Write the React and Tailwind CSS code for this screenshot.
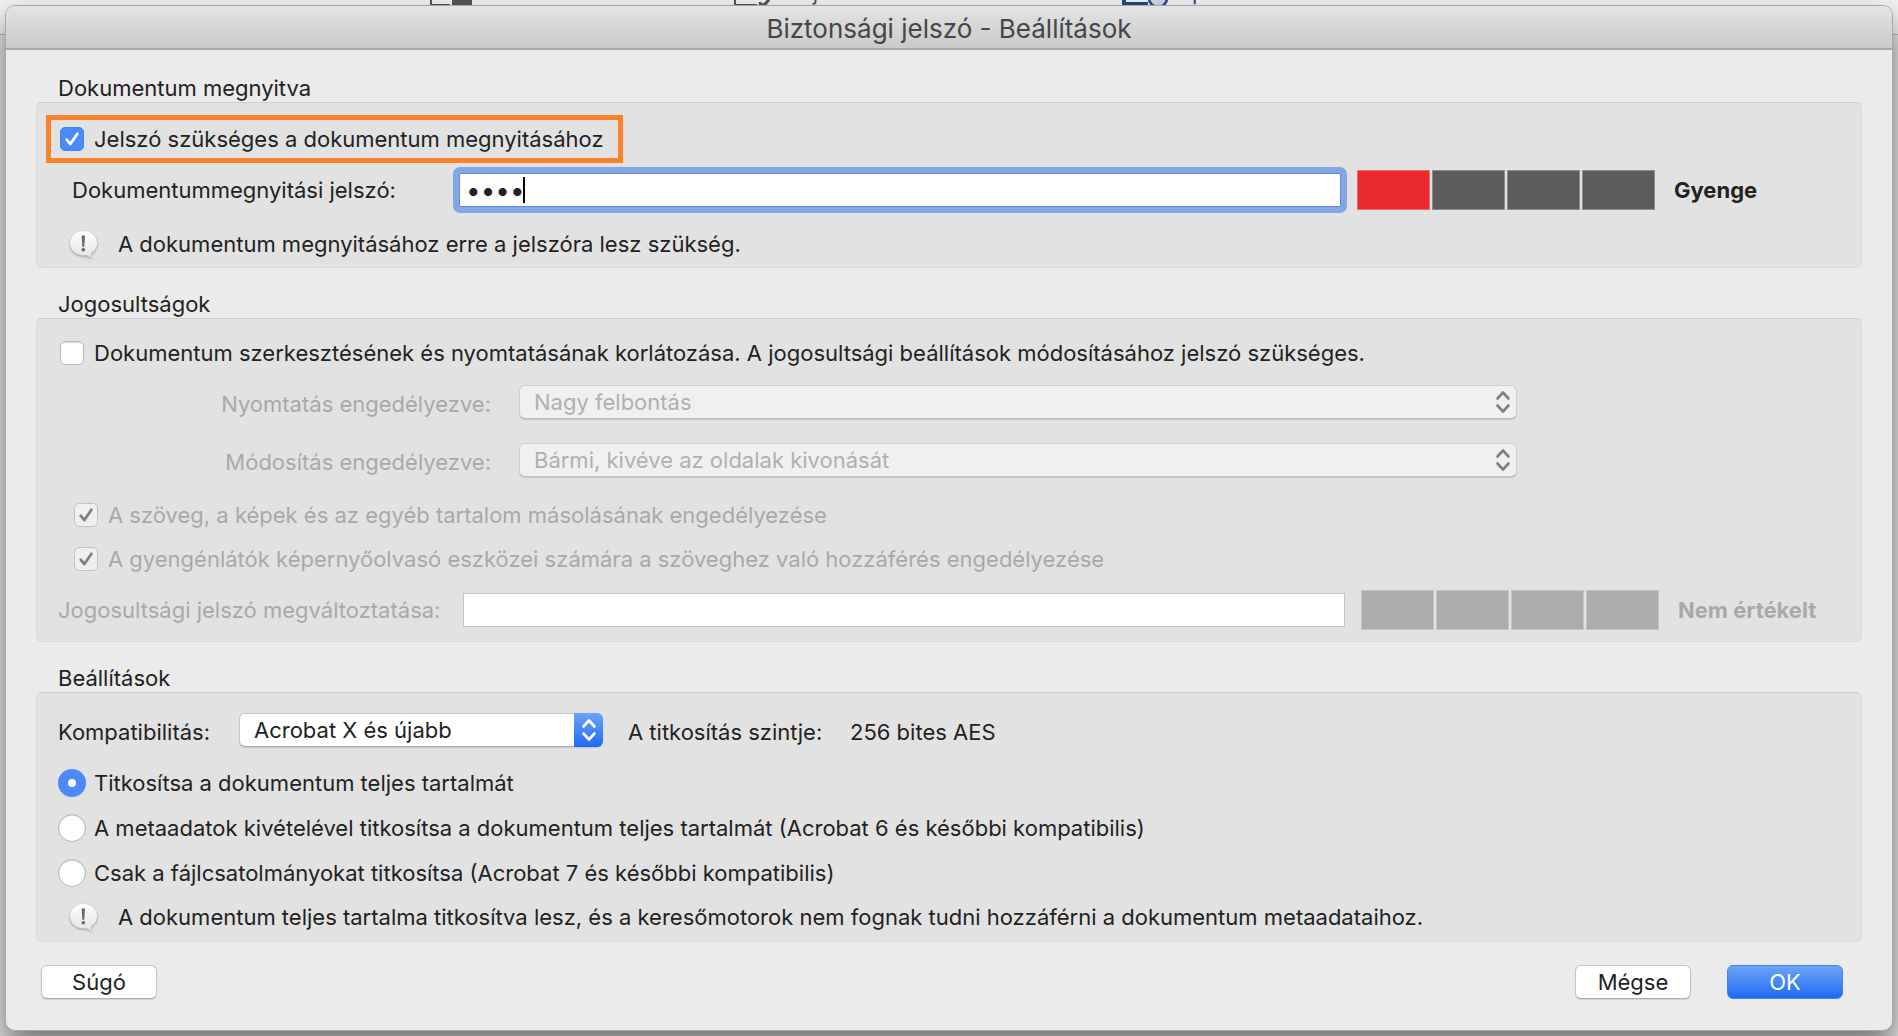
import { useState } from 'react';

function Check({ className }) {
  return (
    <svg viewBox="0 0 24 24" className={`pointer-events-none col-start-1 row-start-1 size-6 ${className}`} fill="none" stroke="currentColor" strokeWidth="2.8" strokeLinecap="round" strokeLinejoin="round">
      <path d="M6.8 12.8 10.4 17 17.4 6.8" />
    </svg>
  );
}

function Checkbox({ label, checked, onChange, disabled }) {
  return (
    <label className={`flex items-center gap-[10px] ${disabled ? 'text-[#a9a9a9]' : ''}`}>
      <span className="grid shrink-0">
        <input
          type="checkbox"
          checked={checked}
          onChange={(e) => onChange?.(e.target.checked)}
          disabled={disabled}
          className="col-start-1 row-start-1 size-6 appearance-none rounded-[5px] border border-[#b9b9b9] bg-white shadow-[inset_0_1px_1px_rgba(0,0,0,0.15)] outline-none checked:border-[#4585f5] checked:bg-[#4b8af8] checked:shadow-none disabled:border-[#c3c3c3] disabled:bg-[#efefef]"
        />
        {checked && <Check className={disabled ? 'text-[#808080]' : 'text-white'} />}
      </span>
      <span>{label}</span>
    </label>
  );
}

function Radio({ label, value, selected, onSelect }) {
  return (
    <label className="flex h-8 items-center gap-2">
      <input
        type="radio"
        name="scope"
        value={value}
        checked={selected === value}
        onChange={() => onSelect(value)}
        className="size-7 shrink-0 appearance-none rounded-full border border-[#b4b4b4] bg-white shadow-[inset_0_1px_1px_rgba(0,0,0,0.15)] outline-none checked:border-[10px] checked:border-[#4b8af8] checked:shadow-none"
      />
      <span>{label}</span>
    </label>
  );
}

function Arrows() {
  return (
    <svg viewBox="0 0 16 24" className="h-6 w-4" fill="none" stroke="currentColor" strokeWidth="2.6" strokeLinecap="round" strokeLinejoin="round">
      <path d="M2.5 8.5 8 2.5l5.5 6M2.5 15.5 8 21.5l5.5-6" />
    </svg>
  );
}

function Select({ id, options, disabled, className }) {
  return (
    <div className={`relative ${className}`}>
      <select
        id={id}
        disabled={disabled}
        className="h-[34px] w-full appearance-none rounded-[6px] border border-[#c4c4c4] border-b-[#b0b0b0] bg-white pl-[14px] pr-10 leading-7 opacity-100 shadow-[0_1px_1px_rgba(0,0,0,0.12)] outline-none disabled:border-[#cfcfcf] disabled:border-b-[#bfbfbf] disabled:bg-[#f0f0f0] disabled:text-[#b0b0b0]"
      >
        {options.map((o) => (
          <option key={o}>{o}</option>
        ))}
      </select>
      <span
        className={`pointer-events-none absolute inset-y-0 right-0 flex w-[29px] items-center justify-center rounded-r-[6px] ${
          disabled ? 'text-[#808080]' : 'bg-gradient-to-b from-[#6ba3f7] to-[#1c69f5] text-white'
        }`}
      >
        <Arrows />
      </span>
    </div>
  );
}

function Meter({ cells }) {
  return (
    <div className="flex shrink-0 gap-[2px]">
      {cells.map((c, i) => (
        <span key={i} className={`h-10 w-[73px] border border-white/30 ${c}`} />
      ))}
    </div>
  );
}

function Note({ children }) {
  return (
    <div className="flex h-8 items-center gap-5">
      <svg viewBox="0 0 29 29" className="size-[29px] shrink-0 drop-shadow-[0_1px_1px_rgba(0,0,0,0.35)]">
        <defs>
          <linearGradient id="bubble" x1="0" y1="0" x2="0" y2="1">
            <stop offset="0" stopColor="#fff" />
            <stop offset="1" stopColor="#e3e3e3" />
          </linearGradient>
        </defs>
        <path d="M14.5 1C22 1 28 6.4 28 13.2c0 4.3-2.4 8-6 10.2l.5 4.6-5-2.8c-1 .2-2 .3-3 .3C7 25.5 1 20 1 13.2S7 1 14.5 1Z" fill="url(#bubble)" />
        <path d="M12.6 5.5h3.4l-.8 11.2h-1.800Z" fill="#666" />
        <circle cx="14.3" cy="19.8" r="1.8" fill="#666" />
      </svg>
      <p>{children}</p>
    </div>
  );
}

function Group({ title, className, children }) {
  return (
    <section>
      <h2 className="pl-[22px] leading-7">{title}</h2>
      <div className={`rounded-[6px] border border-[#dadada] border-t-[#cdcdcd] bg-[#e2e2e2] ${className}`}>{children}</div>
    </section>
  );
}

// Toolbar of the window behind the dialog, mostly covered by it
function Toolbar() {
  return (
    <div className="flex h-[35px] overflow-hidden border-b border-[#b5b5b5] bg-[#f2f2f2]">
      <div className="-mt-[22px] flex h-7 items-end pl-[430px] leading-7 text-[#555]">
        <div className="flex w-[304px] items-end gap-[10px]">
          <svg viewBox="0 0 42 28" className="h-7 w-[42px]">
            <path d="M1 4v23h19" fill="none" stroke="#555" strokeWidth="2" />
            <path d="M22 12h20v16H22Z" fill="#555" />
          </svg>
          <span className="whitespace-nowrap">Szerkesztés letiltása</span>
        </div>
        <div className="flex w-[388px] items-end gap-[10px]">
          <svg viewBox="0 0 42 28" className="h-7 w-[42px]">
            <path d="M1 4v23h22" fill="none" stroke="#555" strokeWidth="2" />
            <path d="M26 24c0 4 4 4 7 0L40 14" fill="none" stroke="#555" strokeWidth="3" />
          </svg>
          <span className="whitespace-nowrap">Rejtett adatok eltávolítása</span>
        </div>
        <div className="flex items-end gap-[10px] text-[#1a4c92]">
          <svg viewBox="0 0 46 28" className="h-7 w-[46px]">
            <path d="M2 4v22h24" fill="none" stroke="#1a4c92" strokeWidth="4" />
            <circle cx="36" cy="20" r="9" fill="#cfd8ea" stroke="#1a4c92" strokeWidth="2.5" />
          </svg>
          <span className="whitespace-nowrap">Speciális beállítások</span>
        </div>
      </div>
    </div>
  );
}

export default function App() {
  const [openPassword, setOpenPassword] = useState('abcd');
  const [requireOpen, setRequireOpen] = useState(true);
  const [restrict, setRestrict] = useState(false);
  const [scope, setScope] = useState('all');

  return (
    <div className="min-h-screen overflow-hidden bg-[#e6e6e6] font-['Inter','Liberation_Sans',sans-serif] text-[22px] leading-7 text-[#222]">
      <Toolbar />

      <main className="relative mx-[5px] -mt-[30px] mb-[5px] rounded-[10px] border border-[#a8a8a8] bg-[#ebebeb] shadow-[0_16px_30px_rgba(0,0,0,0.5)]">
        <header className="flex h-11 items-center justify-center rounded-t-[9px] border-b-2 border-[#a9a9a9] bg-gradient-to-b from-[#e4e4e4] to-[#cacaca] pt-1">
          <h1 className="text-[26px] text-[#464646]">Biztonsági jelszó - Beállítások</h1>
        </header>

        <form className="flex flex-col gap-[22px] px-[30px] pt-6 pb-[31px]" onSubmit={(e) => e.preventDefault()}>
          <Group title="Dokumentum megnyitva" className="pt-3 pb-[7px]">
            <div className="ml-[9px] flex h-12 w-fit items-center border-[5px] border-[#fb822b] pl-[9px] pr-[14px]">
              <Checkbox label="Jelszó szükséges a dokumentum megnyitásához" checked={requireOpen} onChange={setRequireOpen} />
            </div>
            <div className="mt-1 flex h-[46px] items-center pl-[35px]">
              <label htmlFor="open-password" className="w-[387px] shrink-0">
                Dokumentummegnyitási jelszó:
              </label>
              <div className="relative mr-4 min-w-0 flex-1">
                <input
                  id="open-password"
                  type="password"
                  value={openPassword}
                  onChange={(e) => setOpenPassword(e.target.value)}
                  className="block h-[34px] w-full rounded-[1px] border border-[#5f87d6] bg-white pl-[6px] text-[26px] caret-transparent outline-[6px] outline-[#83a6e6]"
                />
                <span className="absolute top-1 left-[64px] h-[26px] w-[2px] bg-black" />
              </div>
              <Meter cells={['bg-[#ea2a2c]', 'bg-[#5c5c5c]', 'bg-[#5c5c5c]', 'bg-[#5c5c5c]']} />
              <output htmlFor="open-password" className="w-[206px] shrink-0 pl-[19px] font-bold">
                Gyenge
              </output>
            </div>
            <div className="mt-[15px] pl-8">
              <Note>A dokumentum megnyitásához erre a jelszóra lesz szükség.</Note>
            </div>
          </Group>

          <Group title="Jogosultságok" className="pt-[18px] pb-[11px]">
            <div className="flex h-8 items-center pl-[23px]">
              <Checkbox
                label="Dokumentum szerkesztésének és nyomtatásának korlátozása. A jogosultsági beállítások módosításához jelszó szükséges."
                checked={restrict}
                onChange={setRestrict}
              />
            </div>
            <div className="mt-4 grid grid-cols-[454px_1fr] items-center gap-x-7 gap-y-6 pr-[344px]">
              <label htmlFor="printing" className="pt-1 text-right leading-7 text-[#a9a9a9]">
                Nyomtatás engedélyezve:
              </label>
              <Select id="printing" options={['Nagy felbontás']} disabled />
              <label htmlFor="changes" className="pt-1 text-right leading-7 text-[#a9a9a9]">
                Módosítás engedélyezve:
              </label>
              <Select id="changes" options={['Bármi, kivéve az oldalak kivonását']} disabled />
            </div>
            <div className="mt-[22px] flex flex-col gap-3 pl-[37px]">
              <div className="flex h-8 items-center">
                <Checkbox label="A szöveg, a képek és az egyéb tartalom másolásának engedélyezése" checked disabled />
              </div>
              <div className="flex h-8 items-center">
                <Checkbox label="A gyengénlátók képernyőolvasó eszközei számára a szöveghez való hozzáférés engedélyezése" checked disabled />
              </div>
            </div>
            <div className="mt-[15px] flex items-center pl-[21px] text-[#a9a9a9]">
              <label htmlFor="permission-password" className="w-[405px] shrink-0">
                Jogosultsági jelszó megváltoztatása:
              </label>
              <input id="permission-password" type="password" disabled className="mr-4 h-[34px] min-w-0 flex-1 border border-[#c3c3c3] bg-white" />
              <Meter cells={['bg-[#acacac]', 'bg-[#acacac]', 'bg-[#acacac]', 'bg-[#acacac]']} />
              <output htmlFor="permission-password" className="w-[202px] shrink-0 pl-[19px] font-bold">
                Nem értékelt
              </output>
            </div>
          </Group>

          <Group title="Beállítások" className="pt-5 pb-2">
            <div className="flex items-center pl-[21px]">
              <label htmlFor="compat" className="w-[181px] pt-1">
                Kompatibilitás:
              </label>
              <Select id="compat" options={['Acrobat X és újabb']} className="w-[364px]" />
              <span className="ml-[25px] w-[222px] pt-1">A titkosítás szintje:</span>
              <span className="pt-1">256 bites AES</span>
            </div>
            <fieldset className="mt-5 flex flex-col gap-[13px] pl-[21px]">
              <Radio label="Titkosítsa a dokumentum teljes tartalmát" value="all" selected={scope} onSelect={setScope} />
              <Radio label="A metaadatok kivételével titkosítsa a dokumentum teljes tartalmát (Acrobat 6 és későbbi kompatibilis)" value="except-metadata" selected={scope} onSelect={setScope} />
              <Radio label="Csak a fájlcsatolmányokat titkosítsa (Acrobat 7 és későbbi kompatibilis)" value="attachments" selected={scope} onSelect={setScope} />
            </fieldset>
            <div className="mt-3 pl-8">
              <Note>A dokumentum teljes tartalma titkosítva lesz, és a keresőmotorok nem fognak tudni hozzáférni a dokumentum metaadataihoz.</Note>
            </div>
          </Group>

          <div className="flex items-center gap-9 pt-[1px] pl-[5px] pr-[19px]">
            <button type="button" className="mr-auto h-[34px] w-[116px] rounded-[6px] border border-[#c4c4c4] border-b-[#adadad] bg-white shadow-[0_1px_1px_rgba(0,0,0,0.12)]">
              Súgó
            </button>
            <button type="button" className="h-[34px] w-[116px] rounded-[6px] border border-[#c4c4c4] border-b-[#adadad] bg-white shadow-[0_1px_1px_rgba(0,0,0,0.12)]">
              Mégse
            </button>
            <button type="submit" className="h-[34px] w-[116px] rounded-[6px] border border-[#4a84e8] bg-gradient-to-b from-[#6ba3f7] to-[#1c69f5] text-white">
              OK
            </button>
          </div>
        </form>
      </main>
    </div>
  );
}
